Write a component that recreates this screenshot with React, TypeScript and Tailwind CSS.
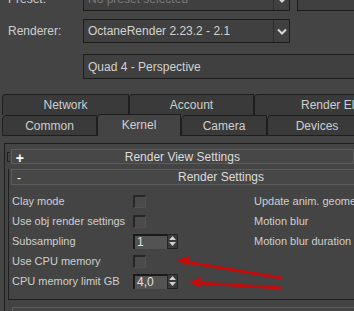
import React from 'react';

const font = "font-['Liberation_Sans',Arial,sans-serif]";

const Chevron: React.FC = () => (
  <svg width="10" height="7" viewBox="0 0 10 7">
    <path d="M1 1.5 L5 5.5 L9 1.5" stroke="#d8d8d8" strokeWidth="2" fill="none" />
  </svg>
);

const Dropdown: React.FC<{ text: string; dim?: boolean }> = ({ text, dim }) => (
  <div className="flex h-[24px] w-[207px] border border-[#1c1c1c] bg-[#404040] shrink-0">
    <div className={`flex-1 flex items-center pl-[4px] text-[12px] ${dim ? 'text-[#7a7a7a]' : 'text-[#d2d2d2]'}`}>{text}</div>
    <div className="w-[16px] flex items-center justify-center border-l border-[#2e2e2e]">
      <Chevron />
    </div>
  </div>
);

const Check: React.FC = () => (
  <div className="w-[13px] h-[13px] border-t-2 border-l-2 border-[#262626] border-r border-b border-r-[#505050] border-b-[#505050] bg-[#4a4a4a]" />
);

const Spinner: React.FC<{ value: string }> = ({ value }) => (
  <div className="flex h-[15px]">
    <div className="w-[34px] h-[15px] border-t-2 border-l-2 border-[#1a1a1a] bg-[#535353] text-[#e0e0e0] text-[12px] leading-[13px] pl-[2px]">{value}</div>
    <div className="w-[11px] h-[15px] flex flex-col items-center justify-center gap-[2px] bg-[#3a3a3a] border border-[#222]">
      <svg width="7" height="4" viewBox="0 0 7 4"><path d="M0 4 L3.5 0 L7 4 Z" fill="#cfcfcf" /></svg>
      <svg width="7" height="4" viewBox="0 0 7 4"><path d="M0 0 L3.5 4 L7 0 Z" fill="#cfcfcf" /></svg>
    </div>
  </div>
);

const tabBase = 'flex items-center justify-center border-t border-l border-r border-[#1e1e1e] rounded-tl-[4px] shrink-0 whitespace-nowrap';

const App: React.FC = () => {
  const rows: { label: string; ctrl: React.ReactNode; right?: string }[] = [
    { label: 'Clay mode', ctrl: <Check />, right: 'Update anim. geometry' },
    { label: 'Use obj render settings', ctrl: <Check />, right: 'Motion blur' },
    { label: 'Subsampling', ctrl: <Spinner value="1" />, right: 'Motion blur duration' },
    { label: 'Use CPU memory', ctrl: <Check /> },
    { label: 'CPU memory limit GB', ctrl: <Spinner value="4,0" /> },
  ];

  return (
    <div className={`relative w-[354px] h-[311px] overflow-hidden bg-[#444444] text-[11px] text-[#cfcfcf] ${font}`}>
      {/* preset row */}
      <div className="flex items-center mt-[-13px] h-[24px]">
        <div className="w-[83px] pl-[8px] text-[12px] shrink-0">Preset:</div>
        <Dropdown text="No preset selected" dim />
        <div className="ml-[7px] w-[80px] h-[24px] border border-[#1c1c1c] bg-[#404040] shrink-0" />
      </div>

      {/* renderer row */}
      <div className="flex items-center mt-[8px] h-[24px]">
        <div className="w-[83px] pl-[8px] text-[12px] shrink-0">Renderer:</div>
        <Dropdown text="OctaneRender 2.23.2 - 2.1" />
      </div>

      {/* view row */}
      <div className="mt-[11px] ml-[83px] w-[300px] h-[25px] border border-[#1c1c1c] bg-[#404040] flex items-center pl-[4px] text-[12px] text-[#d2d2d2]">
        Quad 4 - Perspective
      </div>

      {/* tabs */}
      <div className="mt-[15px] flex pl-[2px] h-[21px] text-[12px]">
        <div className={`${tabBase} w-[127px] bg-[#3a3a3a]`}>Network</div>
        <div className={`${tabBase} w-[125px] bg-[#3a3a3a]`}>Account</div>
        <div className={`${tabBase} w-[140px] bg-[#3a3a3a] justify-start pl-[46px]`}>Render Elements</div>
      </div>
      <div className="flex pl-[2px] h-[21px] items-end text-[12px]">
        <div className={`${tabBase} w-[95px] h-[21px] bg-[#3a3a3a] border-b`}>Common</div>
        <div className={`${tabBase} w-[84px] h-[22px] bg-[#444444] pb-[1px]`}>Kernel</div>
        <div className={`${tabBase} w-[86px] h-[21px] bg-[#3a3a3a] border-b`}>Camera</div>
        <div className={`${tabBase} w-[100px] h-[21px] bg-[#3a3a3a] border-b`}>Devices</div>
      </div>

      {/* panel */}
      <div className="pl-[4px] pt-[7px]">
        <div className="border-t border-l border-[#1e1e1e] pt-[5px] pl-[2px]">
          {/* closed rollout */}
          <div className="flex items-center h-[15px]">
            <div className="w-[3px] h-[10px] border-l border-t border-b border-[#1e1e1e] mr-[1px]" />
            <div className="relative w-[420px] h-[15px] border border-[#5c5c5c] bg-[#474747] flex items-center justify-center text-[12px] text-[#dcdcdc]">
              <span className="absolute left-[4px] top-[-2px] font-bold text-[14px] text-white">+</span>
              Render View Settings
            </div>
          </div>

          {/* open rollout */}
          <div className="mt-[5px] ml-[1px] border-l border-b border-[#1e1e1e] pl-[2px] pb-[8px]">
            <div className="relative w-[420px] h-[16px] border border-[#5c5c5c] bg-[#474747] flex items-center justify-center text-[12px] text-[#dcdcdc]">
              <span className="absolute left-[5px] top-[-1px] text-[12px] text-white">-</span>
              Render Settings
            </div>
            <div className="mt-[6px] flex flex-col">
              {rows.map((r, i) => (
                <div key={i} className="flex items-center h-[20px]">
                  <div className="w-[122px] pl-[1px] whitespace-nowrap shrink-0">{r.label}</div>
                  <div className="w-[121px] shrink-0">{r.ctrl}</div>
                  {r.right && <div className="whitespace-nowrap">{r.right}</div>}
                </div>
              ))}
            </div>
          </div>
          <div className="mt-[7px] ml-[5px] w-[420px] h-[10px] border-t border-l border-[#5c5c5c]" />
        </div>
      </div>

      {/* red annotation arrows */}
      <svg className="absolute left-0 top-0 pointer-events-none" width="354" height="311" style={{ filter: 'blur(0.7px)' }}>
        <line x1="281" y1="278" x2="186" y2="262" stroke="#c30d0d" strokeWidth="3" />
        <path d="M176 260 L190 256 L188 266 Z" fill="#c30d0d" />
        <line x1="281" y1="288" x2="198" y2="283" stroke="#c30d0d" strokeWidth="3" />
        <path d="M189 282 L201 277 L200 288 Z" fill="#c30d0d" />
      </svg>
    </div>
  );
};

export default App;
